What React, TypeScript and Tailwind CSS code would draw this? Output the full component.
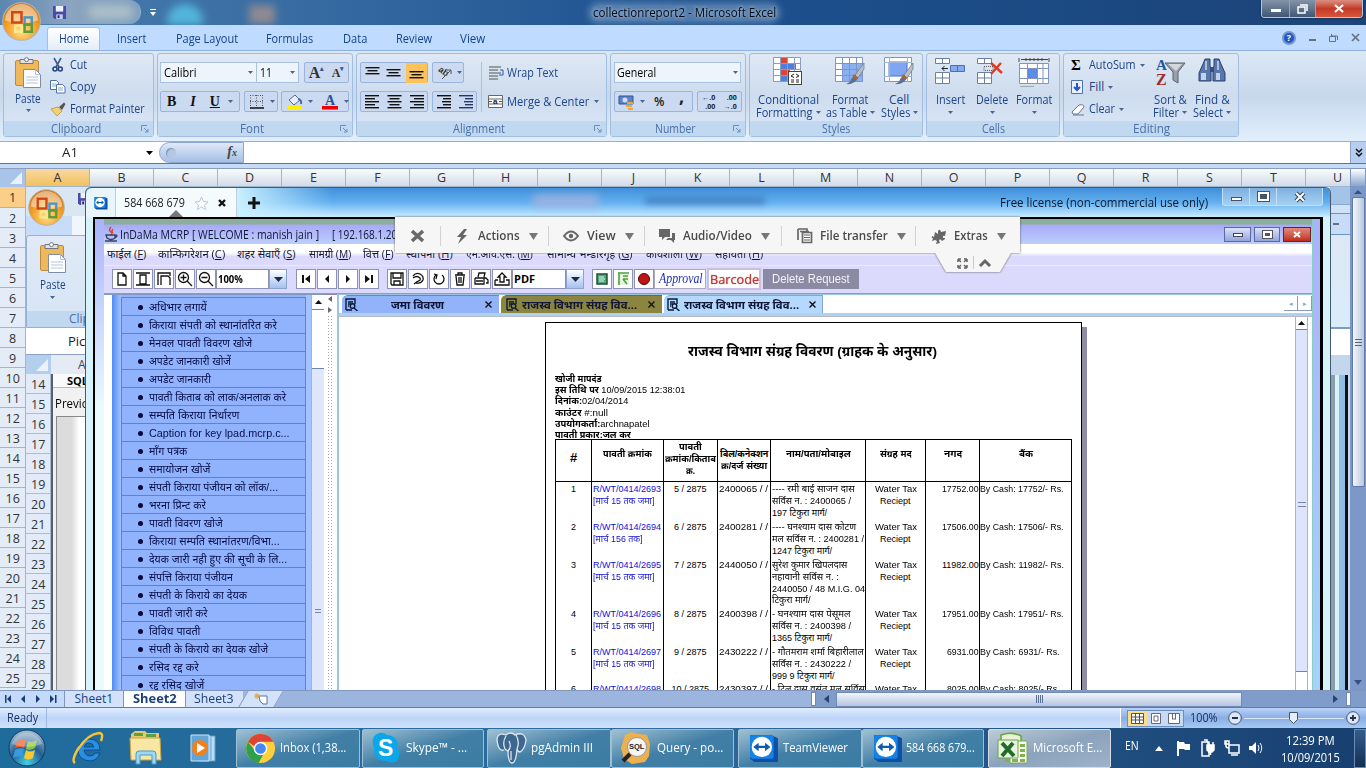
import React, { useLayoutEffect, useRef, useState } from "react";

type Kids = { children?: React.ReactNode };

/* Text run squeezed or stretched to a known advance width. */
function T({ w, c = "", children }: Kids & { w: number; c?: string }) {
  const ref = useRef<HTMLSpanElement>(null);
  const [k, setK] = useState(1);
  useLayoutEffect(() => {
    const n = ref.current?.offsetWidth || w;
    setK(w / n);
  }, [w]);
  return (
    <span className={"inline-block shrink-0 whitespace-nowrap text-left " + c} style={{ width: w }}>
      <span ref={ref} className="inline-block origin-left" style={{ transform: `scaleX(${k})` }}>
        {children}
      </span>
    </span>
  );
}

const Caret = ({ c = "" }: { c?: string }) => (
  <svg className={"shrink-0 " + c} width="5" height="3" viewBox="0 0 5 3">
    <path d="M0 0h5L2.5 3z" fill="#4b6591" />
  </svg>
);

function Svg({ w, h, c = "", children }: Kids & { w: number; h: number; c?: string }) {
  return (
    <svg className={"block shrink-0 overflow-visible " + c} width={w} height={h} viewBox={`0 0 ${w} ${h}`} fill="none">
      {children}
    </svg>
  );
}

/* ---------- icons ---------- */
const Orb = ({ s }: { s: number }) => (
  <svg width={s} height={s} viewBox="0 0 38 38" className="block shrink-0">
    <defs>
      <radialGradient id={"orb" + s} cx=".5" cy=".75" r=".7">
        <stop offset="0" stopColor="#ffe08a" />
        <stop offset=".55" stopColor="#f7a22c" />
        <stop offset="1" stopColor="#cf7616" />
      </radialGradient>
    </defs>
    <circle cx="19" cy="19" r="18.3" fill={`url(#orb${s})`} stroke="#b5b5ac" strokeWidth="1" />
    <path d="M3 18a16 16 0 0 1 32 0q-16 5-32 0z" fill="#fff" opacity=".45" />
    <g fill="none" strokeWidth="2.4">
      <rect x="10" y="10" width="9" height="10" stroke="#cf4516" />
      <rect x="22" y="15" width="7" height="7" stroke="#4b96c8" />
      <rect x="13" y="23" width="6" height="6" stroke="#fbe88f" />
      <rect x="22" y="22" width="7" height="7" stroke="#5b9b3b" />
    </g>
  </svg>
);
const Floppy = ({ s = 13 }: { s?: number }) => (
  <svg width={s} height={s} viewBox="0 0 14 14" className="block shrink-0">
    <path d="M0 0h14v14H2L0 12z" fill="#4a4ba8" />
    <path d="M3 0h8v6H3z" fill="#eef2ff" />
    <path d="M3.5 9h7v5h-7z" fill="#c8ccee" />
    <path d="M5 10h2v3H5z" fill="#22246b" />
  </svg>
);
const PasteIcon = () => (
  <Svg w={27} h={31}>
    <rect x=".5" y="3.5" width="23" height="25" rx="1.5" fill="#efb85a" stroke="#bf8a3b" />
    <path d="M5 2.5h13v4H5z" fill="#dfe3e8" stroke="#707680" />
    <circle cx="11.5" cy="2.6" r="2" fill="#fff" stroke="#707680" />
    <path d="M8.500 12.500h12l5 5v13h-17z" fill="#fff" stroke="#7d8da8" />
    <path d="M20.500 12.500v5h5M11 20h12M11 23h12M11 26h12" stroke="#b6c3dc" />
  </Svg>
);
const Scissors = () => (
  <Svg w={16} h={16}>
    <path d="M4 1l5 9M11 1L6 10" stroke="#41598c" strokeWidth="1.6" />
    <circle cx="5" cy="12" r="2" stroke="#27437e" strokeWidth="1.6" />
    <circle cx="10.300" cy="12" r="2" stroke="#27437e" strokeWidth="1.6" />
  </Svg>
);
const CopyIcon = () => (
  <Svg w={16} h={14}>
    <path d="M.5.500h6l2 2v7h-8z" fill="#fff" stroke="#5272ac" />
    <path d="M6.500 4.500h6l2.500 2.500v6h-8.500z" fill="#fff" stroke="#5272ac" />
    <path d="M2 4h4M2 6h4M8 8h5M8 10h5" stroke="#8fa9d6" />
  </Svg>
);
const Brush = () => (
  <Svg w={16} h={14}>
    <path d="M9 5l5-4.500 1.500 1.500L12 8z" fill="#5c5348" />
    <path d="M1 7l7-2 4 4-5 5z" fill="#f1d272" stroke="#b59433" strokeWidth=".8" />
  </Svg>
);
const Launcher = () => (
  <Svg w={8} h={8}>
    <path d="M.5 6V.5H6" stroke="#6a8cc0" />
    <path d="M3 3l3.500 3.500M7 4v3H4" stroke="#6a8cc0" />
  </Svg>
);
function Lines({ ws, a = "l", c = "#111" }: { ws: number[]; a?: string; c?: string }) {
  return (
    <Svg w={15} h={ws.length * 3 - 1}>
      {ws.map((w, i) => (
        <rect key={i} x={a === "l" ? 0 : a === "r" ? 15 - w : (15 - w) / 2} y={i * 3} width={w} height="1.400" fill={c} />
      ))}
    </Svg>
  );
}
const CondFmt = () => (
  <Svg w={30} h={29}>
    <path d="M.5.500h27v24H.500z" fill="#fff" />
    <path d="M7 0h7v6H7zM7 12h10v6H7z" fill="#dc4630" />
    <path d="M7 6h16v6H7zM7 18h7v6H7z" fill="#4f7fdc" />
    <path d="M.5.500h27v24H.500zM7.500 0v25M14.500 0v25M21.500 0v25M0 6.500h28M0 12.500h28M0 18.500h28" stroke="#8a9cc4" />
    <rect x="15.500" y="14.500" width="13" height="13" fill="#fff" stroke="#444" />
    <path d="M21 17l-3 2 3 1.500M23 17l3 2-3 1.500M18 23h3M23 23h3M18 25h3M23 25h3" stroke="#222" />
  </Svg>
);
const PaintStroke = () => (
  <>
    <path d="M29 6l-9 12 3 3 6-9z" fill="#b9bfc9" stroke="#6c727e" strokeWidth=".7" />
    <path d="M20 18l3 3q-4 7-12 6 5-2 5-5z" fill="#5a7196" />
    <path d="M19 17l4 4-1.500 2-4-3z" fill="#b0652b" />
  </>
);
const FmtTable = () => (
  <Svg w={30} h={29}>
    <path d="M.5.500h27v24H.500z" fill="#fff" />
    <path d="M7 6h21v19H7z" fill="#8ab0f2" />
    <path d="M.5.500h27v24H.500zM7.500 0v25M14.500 0v25M21.500 0v25M0 6.500h28M0 12.500h28M0 18.500h28" stroke="#7d96c9" />
    <PaintStroke />
  </Svg>
);
const CellStyles = () => (
  <Svg w={30} h={29}>
    <path d="M.5.500h27v24H.500z" fill="#fff" stroke="#7d96c9" />
    <path d="M5 5h18v14H5z" fill="#7ea6f2" stroke="#5578c4" />
    <path d="M0 5.500h28M0 19.500h28M5.500 0v25M23.500 0v25" stroke="#9fb4dc" />
    <PaintStroke />
  </Svg>
);
const InsertIcon = () => (
  <Svg w={30} h={29}>
    <path d="M.5 1.500h14v5h-14zM7.500 1v6M.5 15.500h14v11h-14zM7.500 15v12M0 21h15" fill="#fff" stroke="#6b7f9f" />
    <path d="M15.500 8.500h14v6h-14z" fill="#86a9ee" stroke="#4a6fbd" />
    <path d="M22.500 8v7" stroke="#4a6fbd" />
    <path d="M13 11.500H7M9.500 9L7 11.500 9.500 14" stroke="#222" />
  </Svg>
);
const DeleteIcon = () => (
  <Svg w={30} h={29}>
    <path d="M.5 1.500h14v5h-14zM7.500 1v6M.5 15.500h14v11h-14zM7.500 15v12M0 21h15" fill="#fff" stroke="#6b7f9f" />
    <path d="M7 9.500h9v4H7z" stroke="#555" strokeDasharray="1 1" />
    <path d="M14 6l11 10M24 6L14 17" stroke="#e23a22" strokeWidth="2.400" />
  </Svg>
);
const FormatIcon = () => (
  <Svg w={32} h={31}>
    <path d="M1 1v4M4 2.500h2M26 2.500h2M31 1v4M8 1v3M12 1v3M16 1v3M20 1v3M24 1v3M3 2.500h27" stroke="#444" />
    <path d="M1.500 6.500h29v20h-29z" fill="#fff" />
    <path d="M10 12h9v9h-9z" fill="#5c8be8" />
    <path d="M1.500 6.500h29v20h-29zM9.500 6v21M19.500 6v21M25 6v21M1 11.500h30M1 21.500h30" stroke="#8296bd" />
    <path d="M2 29.500h14" stroke="#9aa" />
  </Svg>
);
const SortIcon = () => (
  <Svg w={31} h={30}>
    <path d="M10 6h20l-7 9v11l-5-3v-8z" fill="#9aa0a8" stroke="#5d636b" />
    <path d="M13 7h14l-6 7z" fill="#d4d8dc" />
    <text x="1" y="13" fontFamily="Liberation Serif" fontWeight="700" fontSize="15" fill="#27549c">A</text>
    <text x="1" y="28" fontFamily="Liberation Serif" fontWeight="700" fontSize="16" fill="#a02b2b">Z</text>
  </Svg>
);
const Binoc = () => (
  <Svg w={28} h={28}>
    <path d="M7 2h5v7l1 2v13H1V16l4-9zM16 2h5l2 5 4 9v8H15V11l1-2z" fill="#5a77ab" stroke="#29406f" />
    <path d="M3 16h5v7H3zM18 16h4v7h-4z" fill="#c3d2ec" />
    <path d="M12 10h4v5h-4z" fill="#35507f" />
    <path d="M8 4v9M20 4v9" stroke="#cbd8f0" strokeWidth="1.500" />
  </Svg>
);

/* ---------- ribbon ---------- */
const BoxCls = "flex h-[21px] items-center border border-[#9ab5dd] rounded-[2px] bg-[#cbdaf0]";

function Group({ w, label, lw, launch, children }: Kids & { w: string; label: string; lw: number; launch?: boolean }) {
  return (
    <div className={"flex shrink-0 flex-col rounded-[3px] border border-[#a3bde0] bg-gradient-to-b from-[#dfe9f5] via-[#cddcee] to-[#dbe8f8] " + w}>
      <div className="h-[68px]">{children}</div>
      <div className="flex h-[15px] items-center justify-center bg-[#c1d8f1] text-[#4a6fa8]">
        {launch && <div className="w-[7px]" />}
        <div className="flex flex-1 justify-center"><T w={lw}>{label}</T></div>
        {launch && <div className="flex w-[13px] justify-end pr-1"><Launcher /></div>}
      </div>
    </div>
  );
}
function Big({ w, icon, a, aw, b, bw }: { w: string; icon: React.ReactNode; a: string; aw: number; b?: string; bw?: number }) {
  return (
    <div className={"flex flex-col items-center pt-[3px] leading-[13px] " + w}>
      <div className="flex h-[36px] items-start justify-center">{icon}</div>
      <T w={aw}>{a}</T>
      <div className="flex h-[13px] items-center gap-[3px]">
        {b && <T w={bw || 30}>{b}</T>}
        <Caret />
      </div>
    </div>
  );
}

function Ribbon() {
  return (
    <div className="flex h-[92px] gap-[3px] border-t border-b border-[#8db2e3] bg-gradient-to-b from-[#dde8f5] via-[#c7d8ec] to-[#e2f0fd] px-[3px] pt-[2px] pb-[4px] text-[12px] text-[#1d4487]">
      <Group w="w-[151px]" label="Clipboard" lw={50} launch>
        <div className="flex">
          <div className="flex w-[46px] flex-col items-center pt-[3px] pl-[2px]">
            <PasteIcon />
            <T w={26} c="mt-[4px] leading-[13px]">Paste</T>
            <Caret c="mt-[4px]" />
          </div>
          <div className="flex flex-col">
            <div className="flex h-[22px] items-center gap-[4px]"><Scissors /><T w={17}>Cut</T></div>
            <div className="flex h-[22px] items-center gap-[4px]"><CopyIcon /><T w={26}>Copy</T></div>
            <div className="flex h-[22px] items-center gap-[4px]"><Brush /><T w={75}>Format Painter</T></div>
          </div>
        </div>
      </Group>
      <Group w="w-[196px]" label="Font" lw={24} launch>
        <div className="flex flex-col gap-[8px] pt-[8px] pl-[2px]">
          <div className="flex">
            <div className="flex h-[21px] w-[97px] items-center justify-between border border-[#a9c1e4] bg-[#eef4fc] px-[3px] text-black"><T w={33}>Calibri</T><Caret /></div>
            <div className="flex h-[21px] w-[42px] items-center justify-between border border-l-0 border-[#a9c1e4] bg-[#eef4fc] px-[3px] text-black"><T w={12}>11</T><Caret /></div>
            <div className={BoxCls + " ml-[5px] w-[45px] justify-around font-['Liberation_Serif'] font-bold text-[#333]"}>
              <span className="flex items-center text-[16px]">A<span className="-mt-2 text-[7px] text-[#35569c]">▴</span></span>
              <span className="flex items-center text-[12px]">A<span className="-mt-2 text-[7px] text-[#35569c]">▾</span></span>
            </div>
          </div>
          <div className="flex">
            <div className={BoxCls + " w-[80px] gap-[12px] pl-[6px] font-['Liberation_Serif'] text-[14px] font-bold text-[#111]"}>
              <span>B</span><span className="pl-[2px] italic">I</span><span className="pl-[2px] underline">U</span><Caret c="-ml-1" />
            </div>
            <div className={BoxCls + " ml-[4px] w-[34px] gap-[6px] pl-[5px]"}>
              <Svg w={14} h={14}><path d="M.5 0v13M6.500 0v13M12.500 0v13M0 .5h13M0 6.500h13" stroke="#555" strokeDasharray="1 1.500" /><path d="M0 13h14" stroke="#111" strokeWidth="1.500" /></Svg>
              <Caret />
            </div>
            <div className={BoxCls + " ml-[3px] w-[68px] gap-[5px] pl-[4px]"}>
              <Svg w={17} h={17}><path d="M3 7l6-5 5 5-6 5z" fill="#e8eefb" stroke="#4c69a4" /><path d="M12 6q4 1 3 5" stroke="#4c69a4" strokeWidth="2" /><path d="M1 13h15v3H1z" fill="#ffee00" /></Svg>
              <Caret />
              <Svg w={17} h={17} c="ml-[4px]"><text x="3" y="12" fontFamily="Liberation Serif" fontWeight="700" fontSize="14" fill="#2b4f98">A</text><path d="M0 13h16v3.500H0z" fill="#f00000" /></Svg>
              <Caret />
            </div>
          </div>
        </div>
      </Group>
      <Group w="w-[251px]" label="Alignment" lw={52} launch>
        <div className="flex pt-[8px] pl-[3px]">
          <div className="flex w-[122px] flex-col gap-[8px] border-r border-[#a9c0e0]">
            <div className="flex gap-[4px]">
              <div className={BoxCls + " w-[68px] justify-between pl-[4px]"}>
                <div className="-mt-1"><Lines ws={[14, 10, 14]} a="c" /></div><Lines ws={[14, 10, 14]} a="c" />
                <div className="flex h-[20px] w-[21px] items-center justify-center bg-[#fbc35c] pt-1"><Lines ws={[14, 10, 14]} a="c" /></div>
              </div>
              <div className={BoxCls + " w-[32px] gap-[3px] pl-[4px]"}>
                <Svg w={17} h={15}><text x="1" y="9" fontSize="9" fontWeight="700" fontFamily="Liberation Sans" fill="#333" transform="rotate(35 6 7)">ab</text><path d="M5 14l9-9M10 5h4v4" stroke="#555" /></Svg>
                <Caret />
              </div>
            </div>
            <div className="flex gap-[4px]">
              <div className={BoxCls + " w-[68px] justify-around"}>
                <Lines ws={[14, 10, 14, 10, 14]} /><Lines ws={[14, 10, 14, 10, 14]} a="c" /><Lines ws={[14, 10, 14, 10, 14]} a="r" />
              </div>
              <div className={BoxCls + " w-[45px] justify-around"}>
                <Lines ws={[14, 8, 9, 8, 14]} a="r" /><Lines ws={[14, 8, 9, 8, 14]} a="r" c="#223a6a" />
              </div>
            </div>
          </div>
          <div className="flex flex-col gap-[8px] pl-[6px]">
            <div className="flex h-[21px] items-center gap-[3px]">
              <Svg w={16} h={14}><path d="M1 1h12M1 4h9M1 7h12M1 10h9M1 13h9" stroke="#555" /><path d="M12 4h3v5h-4" stroke="#2f55a0" /></Svg>
              <T w={51}>Wrap Text</T>
            </div>
            <div className="flex h-[21px] items-center gap-[3px]">
              <Svg w={16} h={14}><path d="M.5.500h14v12H.500zM0 4h15M0 9h15" fill="#fff" stroke="#666" /><path d="M1 6.500h3M11 6.500h3" stroke="#2f55a0" /><text x="5" y="9" fontSize="8" fontWeight="700" fontFamily="Liberation Sans" fill="#222">a</text></Svg>
              <T w={82}>Merge &amp; Center</T><Caret c="ml-[2px]" />
            </div>
          </div>
        </div>
      </Group>
      <Group w="w-[136px]" label="Number" lw={41} launch>
        <div className="flex flex-col gap-[8px] pt-[8px] pl-[3px]">
          <div className="flex h-[21px] w-[127px] items-center justify-between border border-[#a9c1e4] bg-[#eef4fc] px-[2px] text-black"><T w={39}>General</T><Caret /></div>
          <div className="flex gap-[4px]">
            <div className={BoxCls + " w-[79px] gap-[5px] pl-[3px] text-[#222]"}>
              <Svg w={17} h={16}><path d="M1 2h14v8H1z" fill="#5d82c8" stroke="#345596" /><circle cx="7" cy="6" r="2.500" fill="#cddcf8" /><path d="M9 8h6v2H9zM8 11h6v2H8zM10 14h5v2h-5z" fill="#e8a83a" /></Svg>
              <Caret /><span className="ml-[4px] w-[20px] font-semibold">%</span><span className="-mt-3 text-[18px] font-bold">,</span>
            </div>
            <div className={BoxCls + " w-[45px] justify-around text-[7px] leading-[9px] font-bold text-[#222]"}>
              <div className="flex flex-col items-end"><span>←.0</span><span>.00</span></div>
              <div className="flex flex-col items-end"><span>.00</span><span>→.0</span></div>
            </div>
          </div>
        </div>
      </Group>
      <Group w="w-[174px]" label="Styles" lw={28}>
        <div className="flex pl-[3px]">
          <Big w="w-[70px]" icon={<CondFmt />} a="Conditional" aw={61} b="Formatting" bw={57} />
          <Big w="w-[54px]" icon={<FmtTable />} a="Format" aw={36} b="as Table" bw={41} />
          <Big w="w-[44px]" icon={<CellStyles />} a="Cell" aw={20} b="Styles" bw={29} />
        </div>
      </Group>
      <Group w="w-[134px]" label="Cells" lw={23}>
        <div className="flex pl-[2px]">
          <Big w="w-[42px]" icon={<InsertIcon />} a="Insert" aw={29} />
          <Big w="w-[42px]" icon={<DeleteIcon />} a="Delete" aw={32} />
          <Big w="w-[42px]" icon={<FormatIcon />} a="Format" aw={36} />
        </div>
      </Group>
      <Group w="w-[176px]" label="Editing" lw={37}>
        <div className="flex pl-[7px]">
          <div className="flex w-[78px] flex-col">
            <div className="flex h-[22px] items-center"><span className="w-[18px] font-['Liberation_Serif'] text-[15px] font-bold text-black">Σ</span><T w={47}>AutoSum</T><Caret c="ml-[4px]" /></div>
            <div className="flex h-[22px] items-center"><Svg w={18} h={14}><path d="M.5.500h11v13H.500z" fill="#e9f1ff" stroke="#5272ac" /><path d="M6 3v6M3 7l3 3 3-3" stroke="#2457c5" strokeWidth="2" /></Svg><T w={15}>Fill</T><Caret c="ml-[4px]" /></div>
            <div className="flex h-[22px] items-center"><Svg w={18} h={13}><path d="M1 9l7-7q5-1 5 2L7 11H2z" fill="#fff" stroke="#68768f" /><path d="M2 12h11" stroke="#68768f" /></Svg><T w={26}>Clear</T><Caret c="ml-[4px]" /></div>
          </div>
          <Big w="w-[42px]" icon={<SortIcon />} a="Sort &" aw={33} b="Filter" bw={26} />
          <Big w="w-[42px]" icon={<Binoc />} a="Find &" aw={35} b="Select" bw={30} />
        </div>
      </Group>
    </div>
  );
}

function TopBars() {
  return (
    <>
      <div className="relative flex h-[25px] items-start bg-gradient-to-r from-[#4c80b0] via-[#1c5190] to-[#1b4377]">
        <div className="flex h-[24px] w-[141px] items-center rounded-r-full border-r border-[#8fb0cf] bg-gradient-to-r from-[#5b86b0] via-[#8ba4c0] to-[#7f9fbe] pl-[53px]">
          <Floppy /><div className="ml-[22px] h-[14px] w-[46px] rounded-full bg-[#d3ded2] opacity-50 blur-[4px]" />
        </div>
        <Svg w={8} h={8} c="mt-[9px] ml-[8px]"><path d="M1 .5h6" stroke="#fff" /><path d="M1 3h6L4 7z" fill="#fff" /></Svg>
        <div className="mt-[4px] ml-[10px] h-[21px] w-[36px] rounded-t-full bg-[#53b5dc] blur-[4px]" />
        <div className="mt-[5px] ml-[46px] h-[19px] w-[26px] bg-[#8f8a92] blur-[4px]" />
        <div className="mt-[5px] ml-[316px] flex h-[16px] items-center rounded-full bg-[#9fbad4]/40 px-[2px] text-[12.500px] text-[#050b14] shadow-[0_0_6px_3px_rgba(159,186,212,0.400)] [text-shadow:0_0_4px_#dce8f4]"><T w={183}>collectionreport2 - Microsoft Excel</T></div>
        <div className="mr-[3px] ml-auto flex h-[18px] overflow-hidden rounded-b-[4px] border border-t-0 border-[#b9c6d6] shadow-[0_0_2px_#0a1a33]">
          <div className="flex w-[28px] items-center justify-center border-r border-[#93a3b8] bg-gradient-to-b from-[#8494a8] to-[#3f5876]"><div className="mt-1 h-[3px] w-[10px] bg-white" /></div>
          <div className="flex w-[26px] items-center justify-center border-r border-[#93a3b8] bg-gradient-to-b from-[#8494a8] to-[#3f5876]"><Svg w={11} h={10}><path d="M3 1h7v6M1 3h7v6H1z" stroke="#fff" strokeWidth="1.500" /></Svg></div>
          <div className="flex w-[46px] items-center justify-center bg-gradient-to-b from-[#dc8f83] via-[#c33a26] to-[#d8563a]"><Svg w={10} h={9}><path d="M1 1l8 7M9 1L1 8" stroke="#fff" strokeWidth="2.200" /></Svg></div>
        </div>
      </div>
      <div className="relative flex h-[25px] items-end bg-[#bfdbff] text-[12px] text-[#15428b]">
        <div className="ml-[47px] flex h-[23px] w-[53px] items-center justify-center rounded-t-[3px] border border-b-0 border-[#9fc0ea] bg-gradient-to-b from-white to-[#e3eefa]"><T w={30}>Home</T></div>
        <div className="flex h-[23px] items-center">
          <T w={29} c="ml-[17px]">Insert</T><T w={62} c="ml-[30px]">Page Layout</T><T w={47} c="ml-[28px]">Formulas</T>
          <T w={24} c="ml-[30px]">Data</T><T w={36} c="ml-[29px]">Review</T><T w={25} c="ml-[28px]">View</T>
        </div>
        <div className="ml-auto flex h-[25px] items-center gap-[13px] pr-[6px]">
          <div className="flex h-[14px] w-[14px] items-center justify-center rounded-full border-2 border-[#6f96dc] bg-[#2856b8] text-[9px] leading-[10px] font-bold text-white">?</div>
          <div className="mt-[5px] h-[2px] w-[7px] bg-[#66707f]" />
          <Svg w={9} h={8}><path d="M2.500 0v2h6v4M.5 2.500h6v5h-6z" stroke="#66707f" /></Svg>
          <Svg w={9} h={9}><path d="M1 1l7 7M8 1L1 8" stroke="#66707f" strokeWidth="1.700" /></Svg>
        </div>
        <div className="absolute -top-[23px] left-[2px]"><Orb s={39} /></div>
      </div>
      <Ribbon />
      <div className="flex h-[22px] border-b border-[#5b74a5] bg-white text-[12.500px] text-[#222]">
        <div className="flex w-[159px] items-center pl-[62px]"><T w={16} c="mt-px">A1</T><svg className="mr-[6px] ml-auto" width="7" height="4"><path d="M0 0h7L3.500 4z" fill="#000" /></svg></div>
        <div className="flex w-[85px] items-center justify-between rounded-l-full border border-[#8ea6cc] bg-gradient-to-b from-[#dfe9f8] to-[#a6bfe5] pr-[6px] pl-[6px]">
          <div className="h-[10px] w-[10px] rounded-full bg-[#b6c7e2] shadow-[inset_1px_1px_1px_#7e96bd]" />
          <span className="font-['Liberation_Serif'] text-[14px] font-bold text-[#444] italic">f<span className="text-[10px]">x</span></span>
        </div>
        <div className="flex-1" />
        <div className="flex w-[16px] items-center justify-center border-l border-[#8ea6cc] bg-[#b6cff0]"><Svg w={8} h={9}><path d="M1 1l3 3 3-3M1 5l3 3 3-3" stroke="#111" strokeWidth="1.500" /></Svg></div>
      </div>
    </>
  );
}

/* ---------- remote desktop contents ---------- */
const side: [string, number][] = [
  ["अधिभार लगायें", 58], ["किराया संपती को स्थानांतरित करे", 128], ["मेनवल पावती विवरण खोजे", 103], ["अपडेट जानकारी खोजें", 82],
  ["अपडेट जानकारी", 62], ["पावती किताब को लाक/अनलाक करे", 137], ["सम्पति किराया निर्धारण", 90], ["Caption for key lpad.mcrp.c...", 141],
  ["माँग पत्रक", 38], ["समायोजन खोजें", 61], ["संपती किराया पंजीयन को लॉक/...", 129], ["भरना प्रिन्ट करे", 57], ["पावती विवरण खोजे", 74],
  ["किराया सम्पति स्थानांतरण/विभा...", 131], ["देयक जारी नही हुए की सूची के लि...", 138], ["संपत्ति किराया पंजीयन", 84], ["संपती के किराये का देयक", 98],
  ["पावती जारी करे", 59], ["विविध पावती", 51], ["संपती के किराये का देयक खोजे", 119], ["रसिद रद्द करे", 50], ["रद्द रसिद खोजें", 55],
];
const menu: [string, string, number, string][] = [
  ["फाईल", "F", 39, "ml-0"], ["कान्फिगरेशन", "C", 67, "ml-[12px]"], ["शहर सेवाएँ", "S", 59, "ml-[12px]"], ["सामग्री", "M", 42, "ml-[13px]"], ["वित्त", "F", 31, "ml-[12px]"],
  ["स्थापना", "H", 47, "ml-[12px]"], ["एम.आय.एस.", "M", 67, "ml-[13px]"], ["सामान्य भन्डारगृह", "G", 86, "ml-[14px]"], ["कार्यशाला", "W", 56, "ml-[13px]"], ["सहायता", "H", 48, "ml-[13px]"],
];

type Row = { n: string; h: string; r: string; m: [string, number]; q: string; k: string; l: [string, number][]; a: string; b: string };
const rows: Row[] = [
  { n: "1", h: "h-[38px]", r: "R/WT/0414/2693", m: ["[मार्च 15 तक जमा]", 61], q: "5 / 2875", k: "2400065 / /", l: [["---- रमी बाई   साजन दास", 83], ["सर्विस न. : 2400065 /", 79], ["197 टिकुरा मार्ग/", 55]], a: "17752.00", b: "17752" },
  { n: "2", h: "h-[38px]", r: "R/WT/0414/2694", m: ["[मार्च 156 तक]", 50], q: "6 / 2875", k: "2400281 / /", l: [["---- घनश्याम दास  कोटण", 84], ["मल सर्विस न. : 2400281 /", 92], ["1247 टिकुरा मार्ग/", 60]], a: "17506.00", b: "17506" },
  { n: "3", h: "h-[49px]", r: "R/WT/0414/2695", m: ["[मार्च 15 तक जमा]", 61], q: "7 / 2875", k: "2440050 / /", l: [["सुरेश कुमार  खिपलदास", 75], ["नहावानी सर्विस न. :", 67], ["2440050 / 48 M.I.G. 04", 93], ["टिकुरा मार्ग/", 39]], a: "11982.00", b: "11982" },
  { n: "4", h: "h-[38px]", r: "R/WT/0414/2696", m: ["[मार्च 15 तक जमा]", 61], q: "8 / 2875", k: "2400398 / /", l: [["- घनश्याम दास  पेसूमल", 78], ["सर्विस न. : 2400398 /", 79], ["1365 टिकुरा मार्ग/", 60]], a: "17951.00", b: "17951" },
  { n: "5", h: "h-[37px]", r: "R/WT/0414/2697", m: ["[मार्च 15 तक जमा]", 61], q: "9 / 2875", k: "2430222 / /", l: [["- गौतमराम शर्मा  बिहारीलाल", 92], ["सर्विस न. : 2430222 /", 79], ["999 9 टिकुरा मार्ग/", 63]], a: "6931.00", b: "6931" },
  { n: "6", h: "h-[38px]", r: "R/WT/0414/2698", m: ["[मार्च 15 तक जमा]", 61], q: "10 / 2875", k: "2430397 / /", l: [["- टिल दास  वसंत मल सर्विस", 93]], a: "8025.00", b: "8025" },
];
const COLS = "grid w-[517px] grid-cols-[36px_72px_54px_53px_95px_60px_54px_92px] border-l border-black";
const HC = "flex flex-col items-center border-r border-black pt-[9px] whitespace-nowrap";
const BC = "border-r border-black pt-[2px] whitespace-nowrap";

function Report() {
  return (
    <div className="h-[368px] w-[537px] border border-b-0 border-black bg-white pl-[9px] font-['Liberation_Sans','Noto_Sans_Devanagari',sans-serif] text-[9px] text-black shadow-[5px_5px_0_#8f8ca6]">
      <div className="flex h-[49px] items-end justify-center pr-[12px] pb-[10px] text-[13.500px] leading-[20px] font-bold"><T w={249}>राजस्व विभाग संग्रह विवरण (ग्राहक के अनुसार)</T></div>
      <div className="flex h-[67px] flex-col pt-px text-[9.500px] leading-[11.200px]">
        <T w={47} c="h-[11.200px] font-bold">खोजी मापदंड</T>
        <T w={130} c="h-[11.200px]"><b>इस तिथि पर</b> 10/09/2015 12:38:01</T>
        <T w={73} c="h-[11.200px]"><b>दिनांक:</b>02/04/2014</T>
        <T w={53} c="h-[11.200px]"><b>काउंटर</b>  #:null</T>
        <T w={94} c="h-[11.200px]"><b>उपयोगकर्ता:</b>archnapatel</T>
        <T w={76} c="h-[11.200px] font-bold">पावती प्रकार:जल कर</T>
      </div>
      <div className={COLS + " h-[43px] border-t border-b leading-[11px] font-bold"}>
        <div className={HC + " !pt-[12px] text-[13px]"}>#</div>
        <div className={HC}><T w={49}>पावती क्रमांक</T></div>
        <div className={HC + " !pt-[2px]"}><T w={23}>पावती</T><T w={51} c="mt-[1px]">क्रमांक/किताब</T><T w={9} c="mt-[1px]">क्र.</T></div>
        <div className={HC}><T w={48}>बिल/कनेक्शन</T><T w={46} c="mt-[1px]">क्र/दर्ज संख्या</T></div>
        <div className={HC}><T w={65}>नाम/पता/मोबाइल</T></div>
        <div className={HC}><T w={32}>संग्रह मद</T></div>
        <div className={HC}><T w={18}>नगद</T></div>
        <div className={HC}><T w={14}>बैंक</T></div>
      </div>
      {rows.map((r) => (
        <div key={r.n} className={COLS + " leading-[11.800px] " + r.h}>
          <div className={BC + " text-center"}>{r.n}</div>
          <div className={BC + " flex flex-col pl-[1px] text-[#1010d8]"}><T w={68}>{r.r}</T><T w={r.m[1]}>{r.m[0]}</T></div>
          <div className={BC + " text-center"}><T w={r.n === "6" ? 38 : 33}>{r.q}</T></div>
          <div className={BC + " pl-px"}><T w={49}>{r.k}</T></div>
          <div className={BC + " flex flex-col pl-px"}>{r.l.map((x, i) => <T key={i} w={x[1]} c="h-[11.800px]">{x[0]}</T>)}</div>
          <div className={BC + " flex flex-col items-center"}><T w={42}>Water Tax</T><T w={31}>Reciept</T></div>
          <div className={BC + " text-right"}><T w={r.a.length > 7 ? 37 : 32}>{r.a}</T></div>
          <div className={BC}><T w={r.a.length > 7 ? 84 : 80}>By Cash: {r.b}/- Rs.</T></div>
        </div>
      ))}
    </div>
  );
}

const TB = "flex h-[20px] w-[20px] shrink-0 items-center justify-center border border-[#8d92b4] bg-white";
const Ic = ({ d, f, children }: Kids & { d: string; f?: boolean }) => (
  <svg width="16" height="16" viewBox="0 0 16 16" fill={f ? "#111" : "none"} stroke={f ? "none" : "#111"} strokeWidth="1.300">
    <path d={d} />{children}
  </svg>
);
const DropBtn = () => (
  <div className="flex h-[20px] w-[18px] items-center justify-center border border-[#8ba4cf] bg-gradient-to-b from-white to-[#a5c0f0]"><svg width="9" height="5"><path d="M0 0h9L4.500 5z" fill="#1d2b4a" /></svg></div>
);
const DocIcon = () => (
  <svg className="shrink-0" width="13" height="13" viewBox="0 0 13 13" fill="none" stroke="#0b1a3a" strokeWidth="1.400"><path d="M1 12V1h9v5M1 12h6M3 4h5M3 6h3M3 8h1" /><circle cx="7.500" cy="8" r="2.300" /><path d="M9 10l3.500 3" /></svg>
);
const TabX = () => <Svg w={7} h={7} c="ml-auto"><path d="M.5.500l6 6M6.500.500l-6 6" stroke="#111" strokeWidth="1.400" /></Svg>;

function Toolbar() {
  return (
    <div className="flex h-[28px] items-center border-b border-[#9a9aaa] bg-[#dcdafc] pb-px pl-[8px] text-[11px] text-black">
      <div className="flex gap-px">
        <div className={TB}><Ic d="M4 2h5l3 3v9H4zM9 2v3h3" /></div>
        <div className={TB}><Ic d="M1 2h14M1 14h14M5 4h6v9H5z" /></div>
        <div className={TB}><Ic d="M2 14V2h12v3M5 14V5h7l2 2v7" /></div>
        <div className={TB}><Ic d="M10 10l5 5M3.500 6.500h6M6.500 3.500v6"><circle cx="6.500" cy="6.500" r="5" /></Ic></div>
        <div className={TB}><Ic d="M10 10l5 5M3.500 6.500h6"><circle cx="6.500" cy="6.500" r="5" /></Ic></div>
      </div>
      <div className="flex h-[20px] w-[53px] items-center border border-[#8d92b4] bg-white pl-px font-bold"><T w={25}>100%</T></div>
      <DropBtn />
      <div className="ml-[9px] flex gap-px">
        <div className={TB}><Ic f d="M4 4h2v8H4zM12 4v8L7 8z" /></div>
        <div className={TB}><Ic f d="M10 4v8L6 8z" /></div>
        <div className={TB}><Ic f d="M6 4v8l4-4z" /></div>
        <div className={TB}><Ic f d="M10 4h2v8h-2zM4 4v8l5-4z" /></div>
      </div>
      <div className="ml-[8px] flex gap-px">
        <div className={TB}><Ic d="M2 2h12v12H3l-1-1zM4 2v5h8V2M5 14v-4h6v4" /></div>
        <div className={TB}><Ic d="M3 5q3-4 7-2 4 2 3 6-2 4-7 3M3 7q4-3 7 0 1 3-2 3M8 10l-4 3" /></div>
        <div className={TB}><Ic d="M5 4a5 5 0 1 0 6 0M3 3l3 1-1 4" /></div>
        <div className={TB}><Ic d="M3 4h10M6 4V2h4v2M4 5l1 9h6l1-9M7 6v6M9 6v6" /></div>
        <div className={TB}><Ic d="M5 6l1-4h6l-1 4M2 7h11l2 2v3h-2M2 7v6h9v-6M3 10h7" /></div>
        <div className={TB}><Ic d="M1 9v5h14V9h-3M4 9H1M8 2L4 6h2v5h4V6h2z" /></div>
      </div>
      <div className="flex h-[20px] w-[54px] items-center border border-[#8d92b4] bg-white pl-px font-bold"><T w={21}>PDF</T></div>
      <DropBtn />
      <div className="ml-[8px] flex gap-px">
        <div className={TB}><Svg w={12} h={12}><path d="M1 1h10v10H1z" fill="#57a57c" stroke="#1d4f38" strokeWidth="1.500" /><path d="M3 4h5M3 6h6M3 8h5" stroke="#cfe" /></Svg></div>
        <div className={TB}><Svg w={13} h={14}><path d="M1 1h11v12H1z" fill="#e8f3e0" /><path d="M1 1h11M2 1v12M6 4h5M6 7h5M6 7l4 5" stroke="#4aa23c" strokeWidth="1.600" /></Svg></div>
        <div className={TB}><div className="h-[12px] w-[12px] rounded-full border border-[#500] bg-[#c11414]" /></div>
      </div>
      <div className="flex h-[20px] w-[52px] items-center border border-[#a9a9bf] bg-white pl-[4px] font-['Liberation_Serif'] text-[14px] text-[#2130b4] italic"><T w={44}>Approval</T></div>
      <div className="ml-[1px] flex h-[22px] w-[54px] items-center border-2 border-[#c9c0dd] bg-white pl-px text-[13px] text-[#c23a3a]"><T w={49} c="[text-shadow:0_0_1px_#c23a3a]">Barcode</T></div>
      <div className="ml-[2px] flex h-[20px] w-[96px] items-center justify-center bg-[#8b8aa3] font-['Liberation_Sans'] text-[12px] text-[#f2f2fa]"><T w={78}>Delete Request</T></div>
    </div>
  );
}

function RemoteApp() {
  return (
    <div className="flex h-[473px] border-t-2 border-r-[3px] border-l-2 border-black">
      <div className="w-[9px] bg-gradient-to-b from-[#aab2fa] to-[#eafafe] to-40%" />
      <div className="flex min-w-0 flex-1 flex-col bg-white text-[#101635]">
        <div className="flex h-[25px] items-center bg-gradient-to-b from-[#8cae9f] from-20% via-[#aaa9fb] via-25% to-[#bcd0fb] text-[12px]">
          <Svg w={15} h={16} c="mt-[5px]"><path d="M7 1q-3 3 0 5 2 2 0 3M9 3q-2 2 0 4" stroke="#d44a25" strokeWidth="1.500" /><path d="M2 9h9v3q-4 3-8 0zM11 9q4 0 0 3M1 15h12" stroke="#3c3f66" strokeWidth="1.400" /></Svg>
          <T w={199} c="mt-[6px] ml-[1px]">InDaMa MCRP [ WELCOME : manish jain ]</T>
          <T w={65} c="mt-[6px] ml-[13px]">[ 192.168.1.20</T>
          <div className="mt-[6px] mr-[1px] ml-auto flex gap-[3px]">
            <div className="flex h-[15px] w-[27px] items-center justify-center border border-[#5f6a9c] bg-gradient-to-b from-[#dbe2fb] to-[#95a5dd]"><div className="h-[4px] w-[10px] border border-[#445] bg-white" /></div>
            <div className="flex h-[15px] w-[26px] items-center justify-center border border-[#5f6a9c] bg-gradient-to-b from-[#dbe2fb] to-[#95a5dd]"><div className="h-[7px] w-[9px] border-2 border-white bg-[#556] outline outline-[#556]" /></div>
            <div className="flex h-[15px] w-[28px] items-center justify-center border border-[#6b2030] bg-gradient-to-b from-[#e08a7c] to-[#c02a1c]"><Svg w={8} h={7}><path d="M1 1l6 5M7 1L1 6" stroke="#fff" strokeWidth="2" /></Svg></div>
          </div>
        </div>
        <div className="flex h-[22px] items-center border-b border-[#eeeede] bg-gradient-to-b from-white from-40% to-[#dcdafc] to-60% pb-[2px] pl-[3px] text-[11px]">
          {menu.map((m, i) => (
            <T key={i} w={m[2]} c={m[3]}>{m[0]} (<u>{m[1]}</u>)</T>
          ))}
        </div>
        <Toolbar />
        <div className="flex min-h-0 flex-1 overflow-hidden">
          <div className="flex w-[220px] shrink-0 border-t border-[#7f98c0] bg-white">
            <div className="w-[8px]" />
            <div className="w-[9px] bg-gradient-to-r from-[#4e8cf2] to-[#a4c2ff]" />
            <div className="w-[185px] bg-[#91b3fd] text-[11.500px] text-[#080f4a]">
              <div className="h-[3px] border-b border-[#6880bb]" />
              {side.map((s, i) => (
                <div key={i} className="flex h-[18px] items-center border-x border-b border-[#6880bb] pt-px pl-[16px] font-['Liberation_Sans','Noto_Sans_Devanagari',sans-serif]">
                  <div className="mr-[6px] h-[5px] w-[5px] rounded-full bg-[#060a38]" />
                  <T w={s[1]}>{s[0]}</T>
                </div>
              ))}
            </div>
            <div className="w-[5px] bg-[#a4c2ff]" />
            <div className="flex w-[13px] flex-col border-l border-[#9fb4dd] bg-[#dfe7fd]">
              <div className="flex h-[15px] shrink-0 items-center justify-center border-b border-[#6d83b0] bg-white"><svg width="7" height="4"><path d="M0 4h7L3.500 0z" fill="#111" /></svg></div>
              <div className="h-[59px] shrink-0 border-b border-[#6d83b0] bg-white" />
              <div className="flex flex-1 flex-col items-center justify-center gap-[2px] pt-[162px]"><i className="h-px w-[6px] bg-[#7788aa]" /><i className="h-px w-[6px] bg-[#7788aa]" /></div>
            </div>
          </div>
          <div className="flex w-[13px] shrink-0 flex-col border-t border-[#8a8aa8] bg-white pl-[3px]">
            <Svg w={6} h={20}><path d="M5 1v6L1 4zM1 12v6l4-3z" fill="#667" /></Svg>
            <div className="w-[5px] flex-1 bg-[radial-gradient(#a9a5a0_0.8px,transparent_1px)] bg-[length:3px_3px]" />
          </div>
          <div className="flex min-w-0 flex-1 flex-col border-t border-l-2 border-[#9cc4de]">
            <div className="flex h-[21px] items-end border-b-[3px] border-[#acd2f0] pl-[3px] text-[11px] font-bold">
              <div className="flex h-[18px] w-[157px] items-center rounded-tl-[6px] border-t border-[#6d86b8] bg-[#92b2fa] pr-[7px] pl-[3px]"><DocIcon /><T w={53} c="ml-[33px]">जमा विवरण</T><TabX /></div>
              <div className="ml-[2px] flex h-[18px] w-[161px] items-center rounded-tl-[6px] border-t border-[#6d6838] bg-[#8b853f] pr-[7px] pl-[5px]"><DocIcon /><T w={115} c="ml-[3px]">राजस्व विभाग संग्रह विव...</T><TabX /></div>
              <div className="ml-[2px] flex h-[18px] w-[159px] items-center rounded-tl-[6px] border-t border-r border-[#86a6cc] bg-[#b5d8ff] pr-[6px] pl-[3px]"><DocIcon /><T w={115} c="ml-[4px]">राजस्व विभाग संग्रह विव...</T><TabX /></div>
              <div className="mb-[2px] ml-auto flex h-[15px]"><div className="w-[14px] border-r border-b border-[#8a9ac0] text-center text-[7px] font-normal text-[#8ab]">◂</div><div className="w-[14px] border-r border-b border-[#8a9ac0] text-center text-[7px] font-normal text-[#8ab]">▸</div></div>
            </div>
            <div className="flex min-h-0 flex-1 border-t border-[#b7b9c4]">
              <div className="min-w-0 flex-1 pt-[5px] pl-[206px]"><Report /></div>
              <div className="mr-[4px] flex w-[13px] flex-col border-x border-[#9fb4dd] bg-[#dfe4fd]">
                <div className="flex h-[13px] items-center justify-center border-b border-[#6d83b0] bg-white"><svg width="7" height="4"><path d="M0 4h7L3.500 0z" fill="#111" /></svg></div>
                <div className="flex flex-1 flex-col items-center justify-center gap-[3px] pt-[8px]"><i className="h-px w-[8px] bg-[#7788aa]" /><i className="h-px w-[8px] bg-[#7788aa]" /></div>
                <div className="h-[19px] border-t border-[#6d83b0] bg-white" />
              </div>
            </div>
          </div>
        </div>
      </div>
      <div className="w-[8px] border-l border-[#8cc] bg-gradient-to-b from-[#aab2fa] to-[#a5d2fa]" />
    </div>
  );
}

function TvMark({ s }: { s: number }) {
  return (
    <svg width={s} height={s} viewBox="0 0 28 28" className="block shrink-0">
      <path d="M1 2h20l6 3v22H5l-4-3z" fill="#0b4fa8" /><rect x="1" y="2" width="22" height="22" rx="2" fill="#1583e6" />
      <circle cx="12" cy="13" r="9.500" fill="#fff" /><path d="M4 13l5-4v3h6V9l5 4-5 4v-3H9v3z" fill="#0c5cb5" />
    </svg>
  );
}

const TvBtn = "flex items-center border-l border-[#d2d2d2] text-[12.500px] font-semibold text-[#4a4a4a]";
const Down = () => <svg className="ml-[9px] shrink-0" width="9" height="7"><path d="M0 0h9L4.500 7z" fill="#777" /></svg>;

function TvToolbar() {
  return (
    <div className="absolute top-[29px] left-[309px] w-[625px] drop-shadow-[0_0_1px_#555]">
      <div className="flex h-[36px] items-stretch bg-[#f6f6f6] pt-[9px] pb-[7px]">
        <div className="flex w-[45px] items-center justify-center"><Svg w={15} h={14}><path d="M2 2l11 10M13 2L2 12" stroke="#6a6a6a" strokeWidth="3.600" /></Svg></div>
        <div className={TvBtn + " w-[108px] pl-[15px]"}><Svg w={12} h={15} c="mr-[10px]"><path d="M8 0L1 8h4l-3 7 9-9H7l4-6z" fill="#666" /></Svg><T w={42}>Actions</T><Down /></div>
        <div className={TvBtn + " w-[96px] pl-[14px]"}><Svg w={16} h={12} c="mr-[8px]"><path d="M1 6q7-9 14 0-7 9-14 0z" stroke="#666" strokeWidth="2" /><circle cx="8" cy="6" r="2.200" fill="#666" /></Svg><T w={29}>View</T><Down /></div>
        <div className={TvBtn + " w-[137px] pl-[13px]"}><Svg w={18} h={16} c="mr-[7px]"><path d="M1 1h11v8H7l-3 3V9H1z" fill="#666" /><path d="M14 5h3v7h-1v3l-3-3H8l2-2h4z" fill="#666" /></Svg><T w={69}>Audio/Video</T><Down /></div>
        <div className={TvBtn + " w-[134px] pl-[15px]"}><Svg w={17} h={16} c="mr-[6px]"><path d="M1 1h9v2M1 1v11M3 3.500h9" stroke="#666" strokeWidth="1.700" /><path d="M5.500 4.500h9v10h-9z" stroke="#666" strokeWidth="1.700" /><path d="M7 7h6M7 9.500h6M7 12h6" stroke="#666" /></Svg><T w={68}>File transfer</T><Down /></div>
        <div className={TvBtn + " flex-1 pl-[14px]"}><Svg w={17} h={15} c="mr-[7px]"><path d="M5 3l3 2V2q2-3 3 1l5-1-1 5q-3-1-2 2 2-1 2 1l-3 2-2-2-1 2 1 2-4 1 1-3-2-1-3 1 1-3q-2 0-1-2l2 1z" fill="#666" /></Svg><T w={34}>Extras</T><Down /></div>
      </div>
      <svg className="ml-[540px] block" width="76" height="19" viewBox="0 0 76 19" fill="none">
        <path d="M0 0h76l-11 19H11z" fill="#f6f6f6" />
        <path d="M23 6h3M23 6v3M32 6h-3M32 6v3M23 15h3M23 15v-3M32 15h-3M32 15v-3M24 7l2 2M31 7l-2 2M24 14l2-2M31 14l-2-2" stroke="#666" strokeWidth="1.500" />
        <path d="M38.500 3v13" stroke="#ccc" /><path d="M45 13l5-5 5 5" stroke="#666" strokeWidth="3" />
      </svg>
    </div>
  );
}

function TeamViewer() {
  return (
    <div className="absolute top-0 left-[59px] h-[503px] w-[1246px] overflow-hidden rounded-t-[6px] border border-b-0 border-[#42596e] bg-[#d6f2fb]">
      <div className="flex h-[29px] bg-gradient-to-b from-[#418fd9] via-[#62b0f0] to-[#c9ecff]">
        <div className="flex w-[29px] items-center justify-center rounded-tl-[6px] bg-[#e8f6fb]"><TvMark s={14} /></div>
        <div className="relative flex w-[122px] items-center border-r border-l border-[#bcd0dc] bg-[#f3fbfd] pl-[8px] text-[12.500px] text-[#222]">
          <T w={61}>584 668 679</T>
          <Svg w={15} h={14} c="ml-[9px]"><path d="M7.500 1l2 4.500 4.500.5-3.500 3 1 4.500-4-2.500-4 2.500 1-4.500L1 6l4.500-.5z" stroke="#a9cbed" fill="#fff" /></Svg>
          <Svg w={8} h={8} c="ml-[9px]"><path d="M1 1l6 6M7 1L1 7" stroke="#111" strokeWidth="2.400" /></Svg>
          <svg className="absolute bottom-0 left-[53px]" width="14" height="7"><path d="M0 7h14L7 0z" fill="#777" /></svg>
        </div>
        <div className="flex w-[96px] items-center bg-gradient-to-r from-[#c9f0ff] to-transparent pl-[11px]"><Svg w={12} h={12}><path d="M6 0v12M0 6h12" stroke="#111" strokeWidth="3" /></Svg></div>
        <div className="mt-[7px] ml-[200px] h-[12px] w-[66px] bg-[#a9b4dc] opacity-80 blur-[4px]" />
        <div className="mt-[9px] ml-[46px] h-[7px] w-[120px] bg-[#3f78b8] opacity-80 blur-[3px]" />
        <T w={208} c="mt-[7px] mr-[14px] ml-auto text-[12px] text-[#06182c]">Free license (non-commercial use only)</T>
        <div className="mr-[7px] flex h-[18px] rounded-b-[3px] border border-t-0 border-[#c3dff5] bg-gradient-to-b from-[#7db0e0] to-[#a5d0f2]">
          <div className="flex w-[27px] items-center justify-center border-r border-[#c3dff5]"><div className="mt-1 h-[4px] w-[11px] border border-[#456] bg-white" /></div>
          <div className="flex w-[27px] items-center justify-center border-r border-[#c3dff5]"><div className="h-[9px] w-[11px] border-2 border-white bg-[#456] outline outline-[#456]" /></div>
          <div className="flex w-[45px] items-center justify-center"><Svg w={12} h={10}><path d="M2 1l8 8M10 1L2 9" stroke="#345" strokeWidth="4" /><path d="M2 1l8 8M10 1L2 9" stroke="#fff" strokeWidth="2" /></Svg></div>
        </div>
      </div>
      <div className="pr-[7px] pl-[7px]"><RemoteApp /></div>
      <TvToolbar />
    </div>
  );
}

function BackWindows() {
  return (
    <div className="flex h-full justify-between bg-[#d6e4f4] text-[12px]">
      <div className="flex w-[61px] flex-col overflow-hidden">
        <div className="relative h-[29px] shrink-0 bg-[#dbe6f3]">
          <div className="absolute top-[2px] left-[2px] z-10"><Orb s={37} /></div>
          <div className="absolute top-[6px] left-[52px]"><Floppy s={12} /></div>
        </div>
        <div className="flex h-[19px] shrink-0 bg-[#c6dcf8]"><div className="ml-[46px] w-[20px] bg-[#f1f6fd]" /></div>
        <div className="flex h-[93px] w-[120px] shrink-0 flex-col rounded-tl-[3px] border border-[#92b0d8] bg-gradient-to-b from-[#e1eaf5] to-[#d5e4f6] pt-[6px] pl-[13px] text-[#1d4487]">
          <PasteIcon /><T w={26} c="mt-[4px]">Paste</T><Caret c="mt-[3px] ml-[10px]" />
          <div className="mt-auto -ml-[13px] bg-[#c1d8f1] pl-[42px] text-[#4a6fa8]">Clip</div>
        </div>
        <div className="flex h-[26px] w-[120px] shrink-0 items-center bg-white pl-[42px] text-[13px] text-[#222]">Pict</div>
        <div className="flex h-[20px] shrink-0 border-t border-[#8aa2c4] text-[#445]"><div className="flex w-[25px] items-end justify-end bg-[#b4cfee] p-[3px]"><svg width="12" height="12"><path d="M12 0v12H0z" fill="#eaf2fd" /></svg></div><div className="flex-1 bg-[#e4ebf5] pt-[2px] pl-[27px]">A</div></div>
        <div className="flex flex-1 overflow-hidden">
          <div className="w-[25px] shrink-0 text-[12.500px] text-[#333]">
            {Array.from({ length: 16 }, (_, i) => <div key={i} className="h-[20px] border-r border-b border-[#a9bdd8] bg-[#e2ebf7] pt-[2px] pl-[5px] leading-[18px]"><T w={14}>{14 + i}</T></div>)}
          </div>
          <div className="flex w-[80px] shrink-0 flex-col border-l-2 border-[#54606c] bg-[#f1f1f1] text-black">
            <div className="h-[14px] border-b border-[#bbb] bg-[#fafafa] pl-[14px] text-[11px] leading-[13px] font-bold whitespace-nowrap">SQL</div>
            <div className="h-[28px] pl-[2px] leading-[32px] whitespace-nowrap"><T w={46}>Previous</T></div>
            <div className="ml-[3px] flex-1 border-t border-l border-[#888] bg-gradient-to-r from-[#dcdcdc] from-20% to-white to-30%" />
          </div>
        </div>
      </div>
      <div className="flex w-[20px] flex-col">
        <div className="h-[18px] border-b border-[#8aa7cc] bg-[#a3c4e8]" /><div className="h-[8px] bg-[#cfe2f6]" />
        <div className="flex h-[22px] items-center justify-center border-y border-[#6f94c4] bg-[#c6dcf8]"><div className="mr-[8px] h-[2px] w-[6px] bg-[#66707f]" /></div>
        <div className="h-[94px] border-b-2 border-[#7c9cc8] bg-gradient-to-b from-[#dde8f5] to-[#d9ecfa]" />
        <div className="h-[26px] bg-white" /><div className="h-[20px] bg-[#c4d6ec]" />
        <div className="flex flex-1"><div className="w-[5px] bg-[#8aa0a8]" /><div className="w-[4px] bg-[#d8f2fa]" /><div className="w-[6px] bg-[#90bde4]" /><div className="w-[3px] bg-[#081018]" /><div className="flex-1 bg-[#cfd9e6]" /></div>
      </div>
    </div>
  );
}

function Sheet() {
  const cols = "ABCDEFGHIJKLMNOPQRSTU".split("");
  return (
    <>
      <div className="h-[4px] bg-[#c5dbf6]" />
      <div className="flex h-[19px]">
        <div className="flex h-[19px] w-[1350px] overflow-hidden border-t border-[#8a9cc0] text-[12.500px] text-[#333]">
          <div className="flex w-[26px] shrink-0 items-end justify-end border-r border-[#9eb6ce] bg-[#a9c4e9] p-[3px]"><svg width="12" height="12"><path d="M12 0v12H0z" fill="#e8f2ff" /></svg></div>
          {cols.map((c, i) => (
            <div key={c} className={"flex w-[64px] shrink-0 items-center justify-center border-r border-b border-[#9eb6ce] pt-px " + (i === 0 ? "bg-gradient-to-b from-[#f9d99f] to-[#f1c15f]" : "bg-gradient-to-b from-[#f9fcfd] to-[#d3dbe9]")}>{c}</div>
          ))}
        </div>
        <div className="flex-1 border border-[#7d96c4] bg-gradient-to-b from-white to-[#8aa5d0]" />
      </div>
      <div className="flex h-[503px]">
        <div className="w-[26px] shrink-0 overflow-hidden bg-[#e4ecf7] text-[12.500px] text-[#333]">
          {Array.from({ length: 25 }, (_, i) => (
            <div key={i} className={"flex items-center justify-center border-r border-b border-[#9eb6ce] pt-[2px] " + (i === 0 ? "h-[21px] bg-[#fbcf87]" : "h-[20px] bg-[#e4ecf7]")}><T w={i < 9 ? 7 : 14}>{i + 1}</T></div>
          ))}
        </div>
        <div className="relative w-[1324px] shrink-0 overflow-hidden"><BackWindows /><TeamViewer /></div>
        <div className="flex flex-1 flex-col items-center bg-[#7b98c8]">
          <svg className="my-[3px]" width="8" height="4"><path d="M0 4h8L4 0z" fill="#36517f" /></svg>
          <div className="flex h-[290px] w-[13px] flex-col items-center justify-center gap-[2px] rounded-[2px] border border-[#5f7aa8] bg-gradient-to-r from-[#f4f7fc] to-[#b9c7dd]"><i className="h-px w-[7px] bg-[#567]" /><i className="h-px w-[7px] bg-[#567]" /><i className="h-px w-[7px] bg-[#567]" /></div>
          <svg className="mt-auto mb-[5px]" width="8" height="5"><path d="M0 0h8L4 5z" fill="#36517f" /></svg>
        </div>
      </div>
    </>
  );
}

function SheetTabs() {
  return (
    <div className="flex h-[17px] items-stretch border-t border-[#8196bb] bg-[#9bb5df] text-[12px] text-[#1d3f7c]">
      <div className="flex w-[64px] items-center justify-around bg-[#c4dafa] pr-[3px]">
        {["M1 0h1.500v8H1zM7 0v8L3 4z", "M6 0v8L2 4z", "M2 0v8l4-4z", "M6 0h1.500v8H6zM1 0v8l4-4z"].map((d) => <svg key={d} width="8" height="8"><path d={d} fill="#1c3a78" /></svg>)}
      </div>
      <div className="flex w-[59px] items-center justify-center border-l border-[#8196bb] bg-[#d1e2fa]"><T w={39}>Sheet1</T></div>
      <div className="flex w-[63px] items-center justify-center border-x border-[#8196bb] bg-white font-bold"><T w={44}>Sheet2</T></div>
      <div className="flex w-[57px] items-center justify-center bg-[#d1e2fa] pr-[2px]"><T w={40}>Sheet3</T></div>
      <div className="flex w-[36px] -skew-x-[30deg] items-center justify-center border-x border-[#8196bb] bg-[#d1e2fa]"><Svg w={14} h={12} c="skew-x-[30deg]"><path d="M5 3h8v8H9l-3-3z" fill="#fff" stroke="#5873a8" /><path d="M3 0v6M0 3h6M1 1l4 4M5 1L1 5" stroke="#e6a03a" /></Svg></div>
      <div className="ml-auto flex w-[555px] items-center bg-[#7f9ccb]">
        <div className="h-[14px] w-[5px] border border-[#7088b4] bg-white" />
        <svg className="ml-[8px]" width="5" height="8"><path d="M5 0v8L0 4z" fill="#28436f" /></svg>
        <div className="ml-[7px] flex h-[15px] w-[406px] items-center justify-center gap-[1px] border border-[#7088b4] bg-gradient-to-b from-[#f1f5fb] to-[#b5c6e0]">{[0, 1, 2, 3].map((i) => <i key={i} className="h-[8px] w-px bg-[#5b6f94]" />)}</div>
        <svg className="ml-[91px]" width="5" height="8"><path d="M0 0v8l5-4z" fill="#28436f" /></svg>
        <div className="ml-[8px] h-[14px] w-[5px] border border-[#7088b4] bg-white" />
      </div>
    </div>
  );
}

function StatusBar() {
  return (
    <div className="flex h-[21px] items-stretch border-t border-[#5d7bb2] bg-gradient-to-b from-[#e0edff] via-[#bdd5f8] to-[#cfe1fb] text-[12px] text-[#152f5e]">
      <div className="flex w-[47px] items-center border-r border-[#9fb8dd] pl-[7px]"><T w={31}>Ready</T></div>
      <div className="ml-auto flex w-[246px] items-center border-l border-white bg-gradient-to-b from-[#bad2f7] via-[#88aee4] to-[#a9c9f3] pl-[6px]">
        <div className="flex h-[17px] border border-[#6d8dc0]">
          <div className="flex w-[19px] items-center justify-center bg-[#f9dc8c]"><Svg w={13} h={11}><path d="M.5.500h12v10H.500zM4.500 0v11M8.500 0v11M0 4h13M0 7h13" fill="#fff" stroke="#555" /></Svg></div>
          <div className="flex w-[18px] items-center justify-center bg-[#c7daf6]"><Svg w={10} h={11}><path d="M.5.500h9v10h-9zM3 3h4v5H3z" fill="#fff" stroke="#667" /></Svg></div>
          <div className="flex w-[18px] items-center justify-center bg-[#c7daf6]"><Svg w={12} h={11}><path d="M.5.500h11v10H.500zM4.500 0v6M7.500 0v6M4 6h4" fill="#fff" stroke="#667" /></Svg></div>
        </div>
        <T w={28} c="ml-[6px]">100%</T>
        <Svg w={14} h={14} c="ml-[10px]"><circle cx="7" cy="7" r="6.300" fill="#dce8fa" stroke="#456" /><path d="M4 7h6" stroke="#234" strokeWidth="2" /></Svg>
        <div className="relative mx-[2px] flex h-[14px] flex-1 items-center"><div className="h-px w-full bg-[#dce8fa]" /><Svg w={9} h={12} c="absolute left-[45px]"><path d="M.5.500h8v7l-4 4-4-4z" fill="#e3edfb" stroke="#456" /></Svg></div>
        <Svg w={14} h={14} c="mr-[6px]"><circle cx="7" cy="7" r="6.300" fill="#dce8fa" stroke="#456" /><path d="M4 7h6M7 4v6" stroke="#234" strokeWidth="1.800" /></Svg>
      </div>
    </div>
  );
}

/* ---------- taskbar ---------- */
const task = "flex h-[39px] items-center rounded-[2px] border border-[#9fc0d4] pl-[8px] text-[12.500px] text-white bg-gradient-to-br from-[#9fc1d2] via-[#427fa6] to-[#3a7ca3]";

function Taskbar() {
  return (
    <div className="flex h-[40px] items-center bg-gradient-to-r from-[#1e6c9b] via-[#30699b] to-[#173f70] font-['Open_Sans','Noto_Sans',sans-serif]">
      <svg className="ml-[8px] shrink-0" width="38" height="38" viewBox="0 0 38 38">
        <defs><radialGradient id="start" cx=".5" cy=".9" r=".9"><stop offset="0" stopColor="#41d0e8" /><stop offset=".5" stopColor="#235e94" /><stop offset="1" stopColor="#a8c3d6" /></radialGradient></defs>
        <circle cx="19" cy="19" r="18" fill="url(#start)" stroke="#123b5e" />
        <path d="M9 12q5-3 9-1l-2 8q-4-2-9 0z" fill="#ea5b27" /><path d="M20 12q4 2 9-1l-2 8q-5 3-9 1z" fill="#8cc63e" /><path d="M7 21q4-3 9-1l-2 8q-4-2-9 1z" fill="#3a9ae0" /><path d="M18 21q4 3 9 0l-2 8q-5 3-9 0z" fill="#fbc92b" />
        <path d="M4 15a15.500 15.500 0 0 1 30 0q-15 6-30 0z" fill="#fff" opacity=".3" />
      </svg>
      <svg className="ml-[25px] shrink-0" width="34" height="34" viewBox="0 0 34 34" fill="none"><path d="M29 19H13q1 6 6 6 4 0 5-3h5q-3 8-10 8Q7 29 7 19 8 8 18 8q11 0 11 11zM13 16h10q-1-4-5-4t-5 4z" fill="#2b8fe0" stroke="#0b4c98" /><path d="M4 32Q0 30 7 18 17 3 28 2q5 0 2 8" stroke="#f2c33a" strokeWidth="2.500" /></svg>
      <svg className="ml-[24px] shrink-0" width="33" height="36" viewBox="0 0 33 36"><path d="M2 4l4-3h10l2 2h12v26H2z" fill="#e8c968" /><path d="M5 3h9v3H5zM17 4h10v3H17z" fill="#5ba048" /><path d="M1 8h30l1 22H2z" fill="#f8e7a2" stroke="#c9a447" /><path d="M7 34V24q0-3 3-3h14q3 0 3 3v10h-4v-9H11v9z" fill="#9fd6f4" stroke="#4b9bc9" /></svg>
      <svg className="ml-[28px] shrink-0" width="27" height="31" viewBox="0 0 27 31"><path d="M9 3h16v25H9z" fill="#bcdcf2" stroke="#5a9fc9" /><path d="M6 3h16v25H6z" fill="#8cc0e6" /><path d="M1 2h18v26H1z" fill="#63a5d8" stroke="#cfe6f6" /><circle cx="10" cy="15" r="8" fill="#f0811f" /><path d="M7 10v10l8-5z" fill="#fff" /></svg>
      <div className={task + " ml-[19px] w-[124px]"}>
        <svg width="31" height="31" viewBox="0 0 32 32"><circle cx="16" cy="16" r="15" fill="#fbd03c" /><path d="M3 9A15 15 0 0 1 29.500 9H16l-6 5z" fill="#dd4436" /><path d="M3 9a15 15 0 0 0 11 22l6-11-9-1z" fill="#2fa04e" /><circle cx="16" cy="16" r="7" fill="#fff" /><circle cx="16" cy="16" r="5.500" fill="#4688f1" /></svg>
        <T w={66} c="ml-[4px]">Inbox (1,38...</T>
      </div>
      <div className={task + " ml-[2px] w-[122px]"}>
        <svg width="29" height="32" viewBox="0 0 29 32"><path d="M8 1q5-1 8 2 12 1 11 14 3 6-1 12-5 3-10 0Q3 30 3 16-1 4 8 1z" fill="#0ba7ea" /><text x="7" y="24" fontFamily="Liberation Sans" fontWeight="700" fontSize="23" fill="#fff">S</text></svg>
        <T w={61} c="ml-[6px]">Skype™ - ...</T>
      </div>
      <div className={task + " ml-[3px] w-[124px]"}>
        <svg width="31" height="32" viewBox="0 0 31 32" fill="none"><path d="M8 18Q2 20 1 7 2 0 10 3q5-4 9 0Q28-1 30 8q-1 9-6 12-2 0-3-3-1 14-5 14-4 0-4-13" fill="#3e6790" stroke="#dce8f2" strokeWidth="1.300" /><path d="M10 4Q6 10 9 17l3 2q4-4 1-10M20 3q4 7 1 14M15 19v9" stroke="#dce8f2" strokeWidth="1.300" /></svg>
        <T w={62} c="ml-[4px]">pgAdmin III</T>
      </div>
      <div className={task + " w-[123px]"}>
        <svg width="32" height="33" viewBox="0 0 32 33"><path d="M5 3l6-3 8 2 8 1 3 9-1 12-4 6-13 2-8-5L1 16z" fill="#edb04f" /><circle cx="17" cy="15" r="9.500" fill="#f5f5f2" stroke="#999" /><path d="M10 22l-7 7" stroke="#222" strokeWidth="4" /><text x="9" y="17" fontFamily="Liberation Sans" fontWeight="700" fontSize="7.500" fill="#222">SQL</text></svg>
        <T w={66} c="ml-[5px]">Query - po...</T>
      </div>
      <div className={task + " ml-[4px] w-[124px] !pl-[10px]"}><TvMark s={30} /><T w={65} c="ml-[4px]">TeamViewer</T></div>
      <div className={task + " w-[122px] !pl-[10px]"}><TvMark s={30} /><T w={69} c="ml-[3px]">584 668 679...</T></div>
      <div className={task + " ml-[4px] w-[123px] !border-[#d3dde8] !from-[#bccbd8] !via-[#8ba3bb] !to-[#9fb2ca]"}>
        <svg width="31" height="33" viewBox="0 0 31 33"><path d="M4 3q10-4 20 1v7H4z" fill="#e7f2d8" stroke="#6aa33a" strokeWidth="1.500" /><path d="M13 9h17v22H13z" fill="#fff" stroke="#78a84a" /><path d="M16 12h5v3h-5zM23 12h5v3h-5zM23 17h5v3h-5zM23 22h5v3h-5zM8 27h5v3H8zM15 27h6v3h-6zM23 27h5v3h-5z" fill="#7db54c" /><path d="M1 8h20v18H1z" fill="#e9f3df" stroke="#6aa33a" /><path d="M5 11l12 13M16 11L5 24" stroke="#226b2b" strokeWidth="4" /></svg>
        <T w={69} c="ml-[5px]">Microsoft E...</T>
      </div>
      <div className="flex flex-1 items-center text-[12px] text-white">
        <T w={14} c="-mt-1 ml-[14px]">EN</T>
        <svg className="ml-[16px]" width="8" height="5"><path d="M0 5h8L4 0z" fill="#fff" /></svg>
        <Svg w={15} h={16} c="ml-[13px]"><path d="M2 1v15" stroke="#fff" strokeWidth="2" /><path d="M3 2h5l1 2h5v6H9L8 9H3z" fill="#fff" /></Svg>
        <Svg w={16} h={18} c="ml-[9px]"><path d="M2 3h7v14H2zM4 1h3v2" stroke="#fff" strokeWidth="1.500" /><path d="M7 6h7v5l-2 2H9l-2-2zM8 3v3M13 3v3M10.500 13v3" stroke="#fff" strokeWidth="1.500" fill="#fff" /></Svg>
        <Svg w={17} h={16} c="ml-[8px]"><path d="M5 5h10v8H5zM7 15h7M2 1v5q0 2 3 2M1 1h4v3H1z" stroke="#fff" strokeWidth="1.500" /></Svg>
        <Svg w={15} h={16} c="ml-[7px]"><path d="M1 6h3l4-4v12l-4-4H1z" fill="#fff" /><path d="M10 5q2 3 0 6M12 3q3.500 5 0 10" stroke="#fff" /></Svg>
        <div className="ml-[18px] flex flex-col items-center pt-px leading-[17px]"><T w={49}>12:39 PM</T><T w={59}>10/09/2015</T></div>
        <div className="ml-auto h-[39px] w-[12px] border border-[#6b8cae] bg-gradient-to-b from-[#335d8c] to-[#132f52]" />
      </div>
    </div>
  );
}

export default function App() {
  return (
    <div className="flex h-[768px] w-[1366px] flex-col overflow-hidden bg-white font-['Open_Sans','Noto_Sans','Noto_Sans_Devanagari',sans-serif] leading-[16px] [&>*]:shrink-0">
      <TopBars />
      <Sheet />
      <SheetTabs />
      <StatusBar />
      <Taskbar />
    </div>
  );
}
